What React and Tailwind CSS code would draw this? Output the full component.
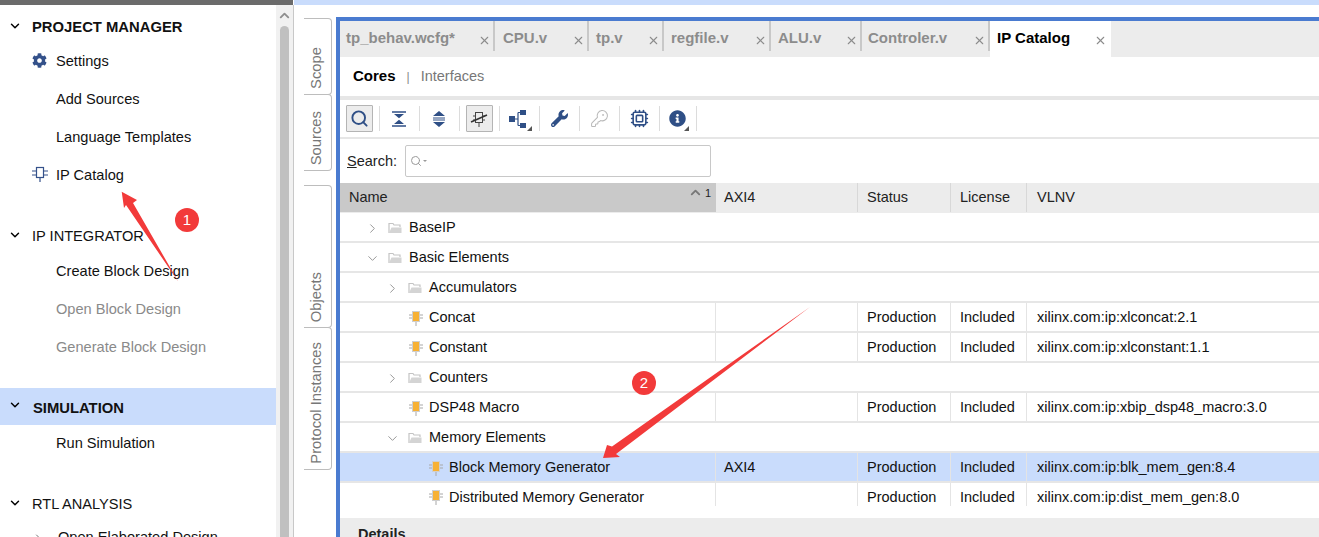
import React from 'react';
import { ChevronDown, ChevronRight, ChevronUp, X, Search, KeyRound, Cpu } from 'lucide-react';
import { FaCog, FaWrench, FaInfoCircle } from 'react-icons/fa';

const IpIcon = ({ className = '' }) => (
  <svg width="16" height="16" viewBox="0 0 16 16" className={className}>
    <path d="M0 5H4M0 9H4M12 5H16M12 9H16M8 12V16" stroke="#34518a" strokeWidth="1.2" fill="none" />
    <rect x="4.5" y="1.5" width="7" height="10" fill="none" stroke="#34518a" strokeWidth="1.2" />
  </svg>
);

const CoreIcon = () => (
  <svg width="14" height="16" viewBox="0 0 14 16" className="shrink-0 ml-px">
    <path d="M0 5H3M0 8H3M11 5H14M11 8H14M7 12V16" stroke="#a8a8a8" strokeWidth="1" fill="none" />
    <rect x="3.5" y="1.5" width="7" height="10" fill="#f7b135" stroke="#cfcfcf" strokeWidth="1" />
  </svg>
);

const FolderIcon = () => (
  <svg width="14" height="12" viewBox="0 0 14 12" className="shrink-0">
    <path d="M1 11V1.5H5L6 3H12V5" fill="none" stroke="#c4c4c4" strokeWidth="1.2" />
    <path d="M1 11L3.5 5.5H13.5V11Z" fill="#d4d4d4" />
  </svg>
);

const Section = ({ label, bold, band, mt = '' }) => (
  <div className={`flex items-center shrink-0 ${band ? 'h-[37px] bg-[#c9dcfc]' : 'h-[30px]'} ${mt}`}>
    <ChevronDown size={14} strokeWidth={2.5} className="ml-2 -mt-[3px] text-black shrink-0" />
    <span className={`${band ? 'ml-[11px] mt-[3px]' : 'ml-[10px]'} ${bold ? 'font-bold text-[14.8px]' : 'mt-[2px]'}`}>{label}</span>
  </div>
);

const Item = ({ label, icon, muted }) => (
  <div className={`flex items-center h-[38px] shrink-0 pl-[32px] ${muted ? 'text-[#8a8a8a]' : 'text-[#111]'}`}>
    <span className="w-[24px] flex shrink-0">{icon}</span>
    <span className="mt-[2px]">{label}</span>
  </div>
);

const Sidebar = () => (
  <div className="w-[276px] shrink-0 bg-white pt-[7px] flex flex-col overflow-hidden text-[#111] text-[14.6px]">
    <Section label="PROJECT MANAGER" bold />
    <Item label="Settings" icon={<FaCog size={15} className="text-[#34518a] -mt-[2px]" />} />
    <Item label="Add Sources" />
    <Item label="Language Templates" />
    <Item label="IP Catalog" icon={<IpIcon className="-mt-[3px]" />} />
    <Section label="IP INTEGRATOR" mt="mt-[27px] mb-px" />
    <Item label="Create Block Design" />
    <Item label="Open Block Design" muted />
    <Item label="Generate Block Design" muted />
    <Section label="SIMULATION" bold band mt="mt-[22px] -mb-px" />
    <Item label="Run Simulation" />
    <Section label="RTL ANALYSIS" mt="mt-[27px]" />
    <div className="flex items-center h-[38px] shrink-0 pl-[32px]">
      <ChevronRight size={12} className="text-[#777] mr-[14px]" />
      <span className="whitespace-nowrap">Open Elaborated Design</span>
    </div>
  </div>
);

const Scrollbar = () => (
  <div className="w-[18px] shrink-0 bg-[#f1f1f1] border-r border-[#c8c8c8] flex flex-col items-center">
    <ChevronUp size={15} strokeWidth={3} className="text-[#8f8f8f] mt-[3px] shrink-0" />
    <div className="w-[9px] flex-1 mt-[3px] bg-[#c0c0c0] rounded-t-md" />
  </div>
);

const SideTab = ({ label, h }) => (
  <div className={`w-[28px] ${h} -mt-px flex items-end justify-center pb-[5px] pr-[2px] border border-l-0 border-[#bdbdbd] rounded-r-[4px] text-[#777] bg-white text-[14.8px]`}>
    <span className="[writing-mode:vertical-rl] rotate-180 whitespace-nowrap">{label}</span>
  </div>
);

const SideTabs = () => (
  <div className="w-[42px] shrink-0 bg-white pl-[10px] pt-[14px] flex flex-col">
    <SideTab label="Scope" h="h-[77px]" />
    <SideTab label="Sources" h="h-[77px]" />
    <div className="h-[15px] shrink-0" />
    <SideTab label="Objects" h="h-[143px]" />
    <SideTab label="Protocol Instances" h="h-[143px]" />
  </div>
);

const tabs = [
  { label: 'tp_behav.wcfg*', w: 'w-[155px]', pl: 'pl-[6px]' },
  { label: 'CPU.v', w: 'w-[94px]', pl: 'pl-[8px]' },
  { label: 'tp.v', w: 'w-[75px]', pl: 'pl-[7px]' },
  { label: 'regfile.v', w: 'w-[107px]', pl: 'pl-[7px]' },
  { label: 'ALU.v', w: 'w-[91px]', pl: 'pl-[7px]' },
  { label: 'Controler.v', w: 'w-[128px]', pl: 'pl-[6px]' },
];

const Tabs = () => (
  <div className="h-[36px] bg-[#ececec] flex shrink-0 font-bold text-[15px]">
    {tabs.map(t => (
      <div key={t.label} className={`${t.w} ${t.pl} relative h-[30px] flex items-center border-r-2 border-[#c8c8c8] text-[#8c8c8c]`}>
        <span className="mt-[4px]">{t.label}</span>
        <X size={13} className="absolute right-[2px] top-[13px] text-[#8c8c8c]" />
      </div>
    ))}
    <div className="w-[121px] relative bg-white flex items-start pl-[7px] pt-[6px] text-black">
      <span>IP Catalog</span>
      <X size={13} className="absolute right-[4px] top-[13px] text-[#8c8c8c]" />
    </div>
  </div>
);

const ToolBtn = ({ children, active, last }) => (
  <div className={`h-[27px] shrink-0 relative flex items-center justify-center pr-[2px] ${last ? 'w-[37px]' : 'w-[40px]'}`}>
    <div className={`w-[27px] h-[27px] flex items-center justify-center rounded-[1px] ${active ? 'bg-[#ececec] border border-[#b4b4b4]' : ''}`}>
      {children}
    </div>
    <div className="absolute right-0 top-[1px] h-[25px] w-px bg-[#dcdcdc]" />
  </div>
);

const Corner = () => (
  <span className="absolute right-[8px] bottom-[1px] w-0 h-0 border-l-[5px] border-l-transparent border-b-[5px] border-b-[#555]" />
);

const Toolbar = () => (
  <div className="h-[37px] flex items-center shrink-0 border-b-2 border-[#e6e6e6] box-content">
    <ToolBtn active><Search size={19} strokeWidth={2.4} className="text-[#2f4f86]" /></ToolBtn>
    <ToolBtn>
      <svg width="16" height="16" viewBox="0 0 16 16">
        <path d="M1 1H15M1 15H15" stroke="#2f4f86" strokeWidth="1.6" />
        <path d="M3 3H13L8 7.2ZM3 13H13L8 8.8Z" fill="#2f4f86" />
      </svg>
    </ToolBtn>
    <ToolBtn>
      <svg width="14" height="16" viewBox="0 0 14 16">
        <path d="M7 0L13 5H1ZM7 16L13 11H1Z" fill="#2f4f86" />
        <path d="M1 7H13M1 9H13" stroke="#2f4f86" strokeWidth="1" />
      </svg>
    </ToolBtn>
    <ToolBtn active>
      <svg width="18" height="18" viewBox="0 0 18 18">
        <path d="M3 6H6M3 10H6M12 6H15M12 10H15M9 13V17" stroke="#444" strokeWidth="1" />
        <rect x="5.5" y="2.5" width="7" height="10" fill="none" stroke="#444" />
        <path d="M1 12L17 5" stroke="#333" strokeWidth="1.6" />
      </svg>
    </ToolBtn>
    <ToolBtn>
      <svg width="20" height="18" viewBox="0 0 20 18">
        <rect x="0" y="6" width="6" height="6" fill="#2f4f86" />
        <rect x="11" y="0" width="6" height="5" fill="#2f4f86" />
        <rect x="11" y="13" width="6" height="5" fill="#2f4f86" />
        <path d="M6 9H9M9 2.5V15.5M9 2.5H11M9 15.5H11" stroke="#2f4f86" strokeWidth="1.2" fill="none" />
      </svg>
      <Corner />
    </ToolBtn>
    <ToolBtn><FaWrench size={17} className="text-[#2f4f86]" /></ToolBtn>
    <ToolBtn><KeyRound size={19} strokeWidth={1.3} className="text-[#b9b9b9]" /></ToolBtn>
    <ToolBtn><Cpu size={19} strokeWidth={2} className="text-[#2f4f86]" /></ToolBtn>
    <ToolBtn last>
      <FaInfoCircle size={17} className="text-[#2f4f86]" />
      <Corner />
    </ToolBtn>
  </div>
);

const SearchRow = () => (
  <div className="h-[44px] flex items-center pl-[7px] shrink-0 pb-[1px]">
    <span className="text-[#222] w-[58px] mt-[3px]"><span className="underline">S</span>earch:</span>
    <div className="w-[306px] h-[32px] border border-[#c8c8c8] rounded-[2px] flex items-center pl-[4px] gap-px">
      <Search size={12} className="text-[#9a9a9a]" />
      <span className="w-0 h-0 border-x-[2px] border-x-transparent border-t-[2px] border-t-[#9a9a9a]" />
    </div>
  </div>
);

const HeaderRow = () => (
  <div className="h-[30px] pb-px flex shrink-0 text-[#222] bg-[#ececec]">
    <div className="w-[376px] bg-[#c9c9c9] flex items-center pl-[9px] relative">
      Name
      <ChevronUp size={15} strokeWidth={3} className="absolute left-[348px] top-[2px] text-[#777]" />
      <span className="absolute left-[365px] top-[2px] text-[11px]">1</span>
    </div>
    <div className="w-[142px] flex items-center pl-[8px] border-r border-[#d8d8d8]">AXI4</div>
    <div className="w-[93px] flex items-center pl-[9px] border-r border-[#d8d8d8]">Status</div>
    <div className="w-[76px] flex items-center pl-[9px] border-r border-[#d8d8d8]">License</div>
    <div className="flex-1 flex items-center pl-[10px]">VLNV</div>
  </div>
);

const rows = [
  { label: 'BaseIP', depth: 0, kind: 'closed' },
  { label: 'Basic Elements', depth: 0, kind: 'open' },
  { label: 'Accumulators', depth: 1, kind: 'closed' },
  { label: 'Concat', depth: 1, vlnv: 'xilinx.com:ip:xlconcat:2.1' },
  { label: 'Constant', depth: 1, vlnv: 'xilinx.com:ip:xlconstant:1.1' },
  { label: 'Counters', depth: 1, kind: 'closed' },
  { label: 'DSP48 Macro', depth: 1, vlnv: 'xilinx.com:ip:xbip_dsp48_macro:3.0' },
  { label: 'Memory Elements', depth: 1, kind: 'open' },
  { label: 'Block Memory Generator', depth: 2, vlnv: 'xilinx.com:ip:blk_mem_gen:8.4', axi: 'AXI4', selected: true },
  { label: 'Distributed Memory Generator', depth: 2, vlnv: 'xilinx.com:ip:dist_mem_gen:8.0', last: true },
];

const indents = ['pl-[25px]', 'pl-[45px]', 'pl-[65px]'];

const TreeRow = ({ row }) => {
  const folder = !!row.kind;
  const align = row.last ? 'items-start pt-[4px]' : 'items-center pt-[2px]';
  return (
    <div className={`flex shrink-0 text-[#111] ${row.last ? 'h-[23px]' : 'h-[30px] border-b-2 border-[#e6e6e6]'} ${row.selected ? 'bg-[#c9dcfc]' : ''}`}>
      <div className={`w-[376px] flex ${align} ${indents[row.depth]} ${folder ? '' : 'border-r border-[#e4e4e4]'}`}>
        <span className="w-[15px] shrink-0 flex">
          {row.kind === 'closed' && <ChevronRight size={15} strokeWidth={1.6} className="text-[#999]" />}
          {row.kind === 'open' && <ChevronDown size={15} strokeWidth={1.6} className="text-[#999]" />}
        </span>
        <span className={`w-[22px] shrink-0 flex pl-[8px] ${row.last ? 'mt-[2px]' : ''}`}>
          {folder ? <FolderIcon /> : <CoreIcon />}
        </span>
        <span className="ml-[7px] whitespace-nowrap">{row.label}</span>
      </div>
      {row.vlnv && (
        <>
          <div className={`w-[142px] flex ${align} pl-[8px] border-r border-[#e4e4e4]`}>{row.axi}</div>
          <div className={`w-[93px] flex ${align} pl-[9px] border-r border-[#e4e4e4]`}>Production</div>
          <div className={`w-[76px] flex ${align} pl-[9px] border-r border-[#e4e4e4]`}>Included</div>
          <div className={`flex-1 flex ${align} pl-[10px] whitespace-nowrap`}>{row.vlnv}</div>
        </>
      )}
    </div>
  );
};

const Main = () => (
  <div className="flex-1 min-w-0 mt-[12px] border-t-4 border-l-4 border-[#4a7bd0] flex flex-col bg-white overflow-hidden">
    <Tabs />
    <div className="h-[39px] flex items-center pl-[13px] shrink-0 border-b-4 border-[#e6e6e6] box-content">
      <span className="font-bold text-black text-[15px]">Cores</span>
      <span className="mx-[11px] text-[#888] text-[12px]">|</span>
      <span className="text-[#777]">Interfaces</span>
    </div>
    <Toolbar />
    <SearchRow />
    <HeaderRow />
    {rows.map(r => <TreeRow key={r.label} row={r} />)}
    <div className="h-[12px] shrink-0" />
    <div className="flex-1 bg-[#ececec] pl-[18px] pt-[6px] font-bold text-[#222]">Details</div>
  </div>
);

const Badge = ({ n, className }) => (
  <div className={`absolute w-[24px] h-[24px] rounded-full bg-[#f23a3a] text-white flex items-center justify-center text-[15px] ${className}`}>{n}</div>
);

export default function App() {
  return (
    <div className="relative w-[1319px] h-[537px] overflow-hidden bg-white text-[14.5px] flex flex-col font-['Liberation_Sans',Arial,sans-serif]">
      <div className="h-[5px] flex shrink-0">
        <div className="w-[293px] bg-[#6b6b6b]" />
        <div className="w-px bg-white" />
        <div className="flex-1 bg-[#c9dcfc]" />
      </div>
      <div className="flex-1 min-h-0 flex">
        <Sidebar />
        <Scrollbar />
        <SideTabs />
        <Main />
      </div>

      {/* red annotations sit on top of the screenshot */}
      <svg className="absolute inset-0 pointer-events-none" width="1319" height="537" viewBox="0 0 1319 537">
        <path d="M121.7 191.7L137 200L133 203L178.5 282L126 205L124 208Z" fill="#f23a3a" />
        <path d="M603 458L607 445L612 446.5L810 307L616 454L620 457Z" fill="#f23a3a" />
      </svg>
      <Badge n="1" className="left-[175px] top-[208px]" />
      <Badge n="2" className="left-[632px] top-[371px]" />
    </div>
  );
}
